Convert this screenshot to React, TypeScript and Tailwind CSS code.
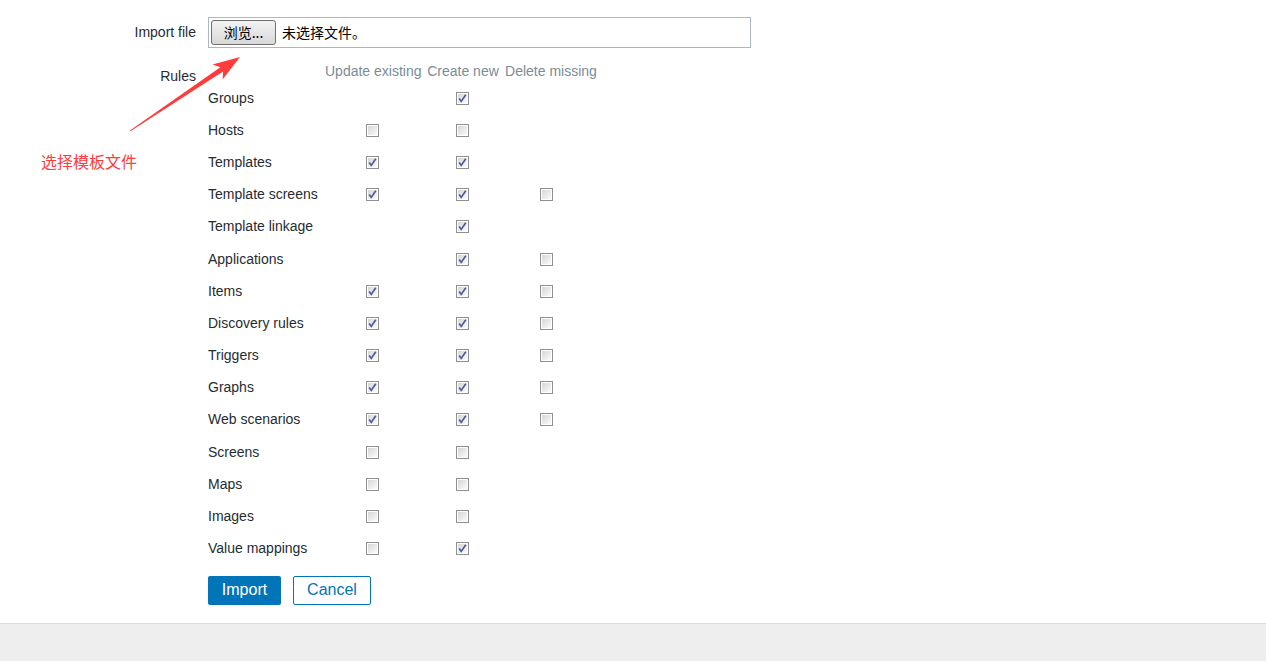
import React from 'react';

type Rule = { name: string; update?: boolean; create?: boolean; del?: boolean };

// undefined = no checkbox in that column
const rules: Rule[] = [
  { name: 'Groups', create: true },
  { name: 'Hosts', update: false, create: false },
  { name: 'Templates', update: true, create: true },
  { name: 'Template screens', update: true, create: true, del: false },
  { name: 'Template linkage', create: true },
  { name: 'Applications', create: true, del: false },
  { name: 'Items', update: true, create: true, del: false },
  { name: 'Discovery rules', update: true, create: true, del: false },
  { name: 'Triggers', update: true, create: true, del: false },
  { name: 'Graphs', update: true, create: true, del: false },
  { name: 'Web scenarios', update: true, create: true, del: false },
  { name: 'Screens', update: false, create: false },
  { name: 'Maps', update: false, create: false },
  { name: 'Images', update: false, create: false },
  { name: 'Value mappings', update: false, create: true },
];

function Check({ checked }: { checked: boolean }) {
  return (
    <svg width="13" height="13" viewBox="0 0 13 13" className="block">
      <defs>
        <linearGradient id="cbg" x1="0" y1="0" x2="1" y2="1">
          <stop offset="0" stopColor="#d6d6d6" />
          <stop offset="1" stopColor="#fbfbfb" />
        </linearGradient>
      </defs>
      <rect x="0.5" y="0.5" width="12" height="12" fill="#fff" stroke="#8e8f8f" />
      <rect x="2" y="2" width="9" height="9" fill="url(#cbg)" />
      {checked && (
        <path d="M3.2 6.6 L5.2 9.4 L9.8 2.8" fill="none" stroke="#4a5c98" strokeWidth="1.7" />
      )}
    </svg>
  );
}

function Cell({ value, pad }: { value?: boolean; pad: string }) {
  return (
    <div className={`flex items-center justify-center ${pad}`}>
      {value !== undefined && <Check checked={value} />}
    </div>
  );
}

export default function App() {
  return (
    <div className="w-[1266px] h-[661px] flex flex-col bg-white font-['Liberation_Sans',Arial,sans-serif] text-[14px] text-[#1f2c33] overflow-hidden">
      <div className="relative h-[623px] pt-[17px]">
        <div className="grid grid-cols-[196px_1fr] gap-x-3">
          <div className="text-right leading-[31px]">Import file</div>
          <div className="w-[543px] h-[31px] border border-[#acb7c5] flex items-center pl-[2px]">
            <div className="h-[25px] w-[65px] rounded-[3px] border border-[#707070] bg-gradient-to-b from-[#f3f3f3] to-[#d8d8d8] flex items-center justify-center text-[14px] text-black font-['Noto_Sans_CJK_SC',sans-serif]">
              浏览...
            </div>
            <span className="ml-[6px] text-[14px] text-black font-['Noto_Sans_CJK_SC',sans-serif]">未选择文件。</span>
          </div>

          <div className="text-right pt-[7px] leading-[16px] mt-[13px]">Rules</div>
          <div className="mt-[13px]">
            <div className="grid grid-cols-[117px_102px_78px_98px] w-max">
              <div className="h-[21px]" />
              {['Update existing', 'Create new', 'Delete missing'].map((h) => (
                <div key={h} className="h-[21px] pr-[6px] text-center leading-[21px] text-[#7a8c98] whitespace-nowrap">
                  {h}
                </div>
              ))}
              {rules.map((r) => (
                <React.Fragment key={r.name}>
                  <div className="h-[32.2px] flex items-center whitespace-nowrap">{r.name}</div>
                  <Cell value={r.update} pad="pr-[8px]" />
                  <Cell value={r.create} pad="pr-[8px]" />
                  <Cell value={r.del} pad="pr-[15px]" />
                </React.Fragment>
              ))}
            </div>
            <div className="flex gap-3 mt-[11px]">
              <button className="h-[29px] w-[73px] rounded-[2px] bg-[#0275b8] text-white text-[16px]">Import</button>
              <button className="h-[29px] w-[78px] rounded-[2px] border border-[#0275b8] text-[#0275b8] text-[16px] bg-white">Cancel</button>
            </div>
          </div>
        </div>

        {/* annotation */}
        <svg className="absolute left-0 top-0 pointer-events-none" width="260" height="180">
          <polygon
            points="129.6,130.7 220.3,67.2 212.6,64.6 240,57 222.6,79.6 223.1,71.4 130.4,131.3"
            fill="#ff3b3b"
          />
        </svg>
        <div className="absolute left-[41px] top-[150px] text-[16px] leading-[22px] text-[#ff3b3b] font-['Noto_Sans_CJK_SC',sans-serif]">
          选择模板文件
        </div>
      </div>
      <div className="flex-1 bg-[#eeeeee] border-t border-[#dcdcdc]" />
    </div>
  );
}
